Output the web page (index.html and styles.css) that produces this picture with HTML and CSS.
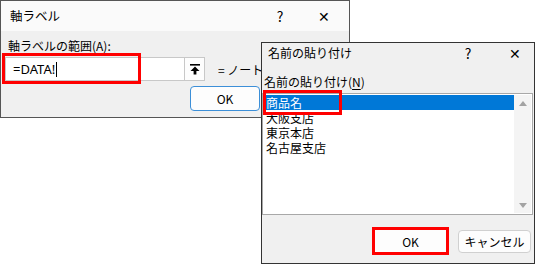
FILE: index.html
```html
<!DOCTYPE html>
<html lang="ja">
<head>
    <meta charset="UTF-8">
    <title>軸ラベル / 名前の貼り付け</title>
    <link rel="stylesheet" href="styles.css">
</head>
<body>
    <!-- 軸ラベル dialog -->
    <div class="dialog axis">
        <div class="titlebar">
            <span class="title">軸ラベル</span>
            <span class="cap help">?</span>
            <span class="cap close">✕</span>
        </div>
        <div class="body">
            <p class="label">軸ラベルの範囲(<u>A</u>):</p>
            <div class="range">
                <div class="refbox">=DATA!<span class="caret"></span></div>
                <div class="collapse">
                    <svg width="10" height="11" viewBox="0 0 10 11">
                        <rect x="0" y="0" width="10" height="1.6" fill="#000"/>
                        <path d="M5 2.5 L9.5 7 L6.4 7 L6.4 10.5 L3.6 10.5 L3.6 7 L0.5 7 Z" fill="#000"/>
                    </svg>
                </div>
                <span class="preview">= ノートPC</span>
            </div>
            <div class="buttons">
                <button class="btn default">OK</button>
            </div>
        </div>
        <div class="mark mark-ref"></div>
    </div>

    <!-- 名前の貼り付け dialog -->
    <div class="dialog paste">
        <div class="titlebar small">
            <span class="title">名前の貼り付け</span>
            <span class="cap help">?</span>
            <span class="cap close">✕</span>
        </div>
        <p class="label">名前の貼り付け(<u>N</u>)</p>
        <div class="listbox">
            <ul class="items">
                <li class="selected">商品名</li>
                <li>大阪支店</li>
                <li>東京本店</li>
                <li>名古屋支店</li>
            </ul>
            <div class="scrollbar">
                <span class="arrow up"></span>
                <span class="arrow down"></span>
            </div>
        </div>
        <div class="buttons">
            <button class="btn marked">OK</button>
            <button class="btn">キャンセル</button>
        </div>
        <div class="mark mark-item"></div>
    </div>
</body>
</html>
```

FILE: styles.css
```css
*
{
    box-sizing: border-box;
}
body
{
    margin: 0;
    width: 535px;
    height: 265px;
    background: #fff;
    position: relative;
    overflow: hidden;
    font-family: "Noto Sans CJK JP", sans-serif;
    font-size: 12px;
    color: #000;
}
p
{
    margin: 0;
}
u
{
    text-decoration: underline;
    text-underline-offset: 2px;
}

/* windows on the desktop */
.dialog
{
    position: absolute;
    background: #f0f0f0;
    border: 1px solid #555;
}
.axis
{
    left: 0;
    top: 0;
    width: 350px;
    height: 118px;
}
.paste
{
    left: 261px;
    top: 42px;
    width: 274px;
    height: 222px;
    border-color: #333;
}

.titlebar
{
    display: flex;
    align-items: center;
    height: 30px;
    background: #fafafa;
    padding-left: 9px;
    line-height: 16px;
}
.titlebar .title
{
    flex: 1;
    font-size: 12.5px;
}
.cap
{
    text-align: center;
    font-size: 14px;
}
.axis .help{ width: 44px; }
.axis .close{ width: 44px; margin-right: 3px; }

.titlebar.small
{
    height: 18px;
    margin-top: 1px;
    background: #f0f0f0;
    padding-left: 6px;
}
.titlebar.small .title
{
    font-size: 12px;
}
.paste .help{ width: 56px; }
.paste .close{ width: 38px; }

.label
{
    line-height: 16px;
}

/* 軸ラベル body */
.axis .body
{
    padding: 7px 0 0 4px;
}
.axis .label
{
    padding-left: 3px;
}
.range
{
    display: flex;
    align-items: center;
    margin-top: 3px;
    height: 24px;
}
.refbox
{
    display: flex;
    align-items: center;
    width: 180px;
    height: 24px;
    background: #fff;
    border: 1px solid #c8c8c8;
    padding-left: 7px;
    font-family: "Noto Sans", sans-serif;
    font-size: 13px;
}
.caret
{
    display: inline-block;
    width: 1px;
    height: 15px;
    background: #000;
    margin-left: 1px;
}
.collapse
{
    display: flex;
    align-items: center;
    justify-content: center;
    width: 20px;
    height: 24px;
    background: #fdfdfd;
    border: 1px solid #c8c8c8;
    border-left: none;
}
/* only the part left of the pasted dialog shows */
.preview
{
    margin-left: 13px;
    width: 43px;
    overflow: hidden;
    white-space: nowrap;
}
.buttons
{
    display: flex;
    justify-content: flex-end;
    align-items: center;
    gap: 8px;
}
.axis .buttons
{
    justify-content: flex-start;
    margin-top: 5px;
    padding-left: 185px;
}
.btn
{
    width: 70px;
    height: 25px;
    padding: 0;
    background: #fdfdfd;
    border: 1px solid #d0d0d0;
    border-radius: 4px;
    font-family: "Noto Sans CJK JP", sans-serif;
    font-size: 12px;
    color: #000;
}
.btn.default
{
    border: 1px solid #3c8fd8;
}

/* 名前の貼り付け body */
.paste .label
{
    margin-top: 12px;
    padding-left: 2px;
}
.listbox
{
    display: flex;
    margin-top: 3px;
    width: 271px;
    height: 122px;
    background: #fff;
    border: 1px solid #a8a8a8;
    padding: 1px 1px 1px 2px;
}
.items
{
    flex: 1;
    list-style: none;
    margin: 0;
    padding: 0;
}
.items li
{
    height: 15px;
    line-height: 15px;
    padding-left: 1px;
}
.items li.selected
{
    background: #0078d7;
    color: #fff;
}
.scrollbar
{
    width: 17px;
    display: flex;
    flex-direction: column;
    justify-content: space-between;
    align-items: center;
    padding: 6px 0 5px;
    background: #f4f4f4;
}
.arrow
{
    width: 0;
    height: 0;
    border-left: 4px solid transparent;
    border-right: 4px solid transparent;
}
.arrow.up{ border-bottom: 5px solid #a3a3a3; }
.arrow.down{ border-top: 5px solid #a3a3a3; }

.paste .buttons
{
    margin-top: 12px;
    gap: 9px;
    padding-right: 3px;
}
.paste .btn
{
    width: 73px;
    height: 23px;
}
.paste .btn.marked
{
    width: 77px;
    height: 28px;
    border: 3px solid #f00;
    border-radius: 0;
}

/* red highlight frames drawn over the screenshot */
.mark
{
    position: absolute;
    border: 3px solid #f00;
    pointer-events: none;
}
.mark-ref
{
    left: 1px;
    top: 52px;
    width: 139px;
    height: 31px;
}
.mark-item
{
    left: 1px;
    top: 47px;
    width: 79px;
    height: 25px;
}
```
